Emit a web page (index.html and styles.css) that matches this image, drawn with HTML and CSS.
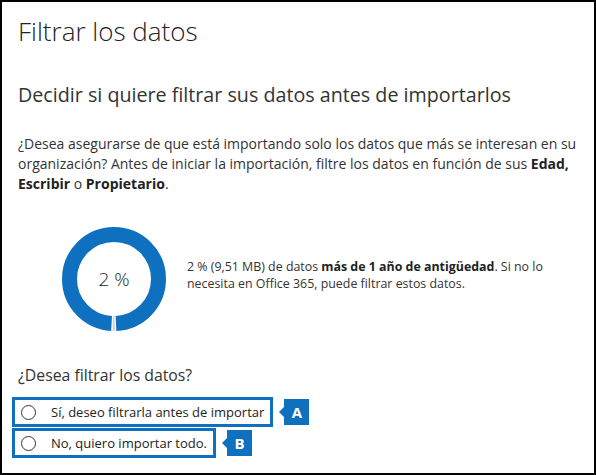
FILE: index.html
```html
<!DOCTYPE html>
<html lang="es">
<head>
<meta charset="utf-8">
<link rel="stylesheet" href="styles.css">
</head>
<body>
<div class="frame">
  <h1 class="title">Filtrar los datos</h1>
  <h2 class="subtitle">Decidir si quiere filtrar sus datos antes de importarlos</h2>
  <p class="intro">¿Desea asegurarse de que está importando solo los datos que más se interesan en su<br>organización? Antes de iniciar la importación, filtre los datos en función de sus <b>Edad,</b><br><b>Escribir</b> o <b>Propietario</b>.</p>
  <div class="stat">
    <div class="donut">
      <svg width="104" height="104" viewBox="0 0 104 104">
        <circle cx="52" cy="52" r="44.5" fill="none" stroke="#1070c0" stroke-width="15" stroke-dasharray="274.6 5" stroke-dashoffset="-2.5" transform="rotate(90 52 52)"/>
        <circle cx="52" cy="52" r="44.5" fill="none" stroke="#d4d4d4" stroke-width="15" stroke-dasharray="2.5 277.1" stroke-dashoffset="1.25" transform="rotate(90 52 52)"/>
      </svg>
      <span class="donut-label">2 %</span>
    </div>
    <p class="stat-text">2 % (9,51 MB) de datos <b>más de 1 año de antigüedad</b>. Si no lo<br>necesita en Office 365, puede filtrar estos datos.</p>
  </div>
  <p class="question">¿Desea filtrar los datos?</p>
  <div class="options">
    <div class="option-row">
      <label class="option"><span class="radio"></span>Sí, deseo filtrarla antes de importar</label>
      <span class="badge">A</span>
    </div>
    <div class="option-row">
      <label class="option"><span class="radio"></span>No, quiero importar todo.</label>
      <span class="badge">B</span>
    </div>
  </div>
</div>
</body>
</html>
```
FILE: styles.css
```css
* { box-sizing: border-box; }
body {
  margin: 0;
  font-family: "Open Sans", "Noto Sans", sans-serif;
  color: #333;
  background: #fff;
}
.frame {
  width: 596px;
  height: 475px;
  border: 2px solid #000;
  padding: 0 0 0 16px;
  display: flex;
  flex-direction: column;
}
.title {
  margin: 12px 0 0 0;
  font-size: 26px;
  font-weight: 300;
  line-height: 34px;
  color: #222;
}
.subtitle {
  margin: 34px 0 0 0;
  font-size: 19.7px;
  font-weight: 400;
  line-height: 26px;
  color: #333;
}
.intro {
  margin: 26px 0 0 0;
  white-space: nowrap;
  font-size: 14px;
  line-height: 20px;
}
.intro b, .stat-text b { font-weight: 700; color: #222; }
.stat {
  display: flex;
  align-items: flex-start;
  margin-top: 33px;
}
.donut {
  position: relative;
  width: 104px;
  height: 104px;
  margin-left: 44px;
}
.donut svg { display: block; }
.donut-label {
  position: absolute;
  inset: 0;
  display: flex;
  align-items: center;
  justify-content: center;
  font-size: 19px;
  font-weight: 300;
  color: #222;
}
.stat-text {
  margin: 31px 0 0 21px;
  white-space: nowrap;
  font-size: 12.4px;
  line-height: 17px;
}
.question {
  margin: 34px 0 0 0;
  font-size: 15.8px;
  line-height: 20px;
}
.options {
  margin: 12px 0 0 -6px;
  display: flex;
  flex-direction: column;
  gap: 1px;
}
.option-row {
  display: flex;
  align-items: center;
}
.option {
  display: flex;
  align-items: center;
  height: 30px;
  border: 3px solid #1070c0;
  padding: 0 6px 0 6px;
  font-size: 13px;
  color: #222;
}
.radio {
  width: 15px;
  height: 15px;
  border: 1.5px solid #333;
  border-radius: 50%;
  margin-right: 15px;
}
.badge {
  position: relative;
  margin-left: 11px;
  width: 25px;
  height: 26px;
  background: #1070c0;
  color: #fff;
  font-weight: 700;
  font-size: 15px;
  display: flex;
  align-items: center;
  justify-content: center;
}
.badge::before {
  content: "";
  position: absolute;
  left: -5px;
  top: 50%;
  margin-top: -5px;
  border-right: 5px solid #1070c0;
  border-top: 5px solid transparent;
  border-bottom: 5px solid transparent;
}
```
